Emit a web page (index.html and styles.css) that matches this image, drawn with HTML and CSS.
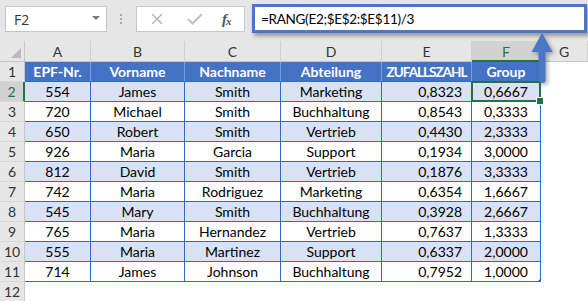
FILE: index.html
```html
<!DOCTYPE html>
<html>
<head>
<meta charset="utf-8">
<link rel="stylesheet" href="styles.css">
</head>
<body>
<div class="app">
  <div class="toolbar">
    <div class="namebox"><span>F2</span><span class="caret"></span></div>
    <div class="dots"><i></i><i></i><i></i></div>
    <div class="fxbox">
      <svg class="ico-x" width="12" height="12" viewBox="0 0 12 12"><path d="M1 1L11 11M11 1L1 11" stroke="#b3b3b3" stroke-width="1.4" fill="none"/></svg>
      <svg class="ico-check" width="16" height="12" viewBox="0 0 16 12"><path d="M1 6L5.5 10.5L15 1" stroke="#c2c2c2" stroke-width="2" fill="none"/></svg>
      <span class="fx">f<sub>x</sub></span>
    </div>
    <div class="formula">=RANG(E2;$E$2:$E$11)/3</div>
  </div>
  <div class="sheet">
    <div class="corner"><span class="tri"></span></div>
    <div class="ch">A</div><div class="ch">B</div><div class="ch">C</div><div class="ch">D</div><div class="ch">E</div><div class="ch sel">F</div><div class="ch">G</div>

    <div class="rh">1</div>
    <div class="th">EPF-Nr.</div><div class="th">Vorname</div><div class="th">Nachname</div><div class="th">Abteilung</div><div class="th tight">ZUFALLSZAHL</div><div class="th">Group</div><div class="g"></div>

    <div class="rh sel">2</div>
    <div class="td b">554</div><div class="td b">James</div><div class="td b">Smith</div><div class="td b">Marketing</div><div class="td b num">0,8323</div><div class="td b active">0,6667</div><div class="g"></div>

    <div class="rh">3</div>
    <div class="td">720</div><div class="td">Michael</div><div class="td">Smith</div><div class="td">Buchhaltung</div><div class="td num">0,8543</div><div class="td">0,3333</div><div class="g"></div>

    <div class="rh">4</div>
    <div class="td b">650</div><div class="td b">Robert</div><div class="td b">Smith</div><div class="td b">Vertrieb</div><div class="td b num">0,4430</div><div class="td b">2,3333</div><div class="g"></div>

    <div class="rh">5</div>
    <div class="td">926</div><div class="td">Maria</div><div class="td">Garcia</div><div class="td">Support</div><div class="td num">0,1934</div><div class="td">3,0000</div><div class="g"></div>

    <div class="rh">6</div>
    <div class="td b">812</div><div class="td b">David</div><div class="td b">Smith</div><div class="td b">Vertrieb</div><div class="td b num">0,1876</div><div class="td b">3,3333</div><div class="g"></div>

    <div class="rh">7</div>
    <div class="td">742</div><div class="td">Maria</div><div class="td">Rodriguez</div><div class="td">Marketing</div><div class="td num">0,6354</div><div class="td">1,6667</div><div class="g"></div>

    <div class="rh">8</div>
    <div class="td b">545</div><div class="td b">Mary</div><div class="td b">Smith</div><div class="td b">Buchhaltung</div><div class="td b num">0,3928</div><div class="td b">2,6667</div><div class="g"></div>

    <div class="rh">9</div>
    <div class="td">765</div><div class="td">Maria</div><div class="td">Hernandez</div><div class="td">Vertrieb</div><div class="td num">0,7637</div><div class="td">1,3333</div><div class="g"></div>

    <div class="rh">10</div>
    <div class="td b">555</div><div class="td b">Maria</div><div class="td b">Martinez</div><div class="td b">Support</div><div class="td b num">0,6337</div><div class="td b">2,0000</div><div class="g"></div>

    <div class="rh">11</div>
    <div class="td">714</div><div class="td">James</div><div class="td">Johnson</div><div class="td">Buchhaltung</div><div class="td num">0,7952</div><div class="td last">1,0000</div><div class="g"></div>

    <div class="rh">12</div>
    <div class="g"></div><div class="g"></div><div class="g"></div><div class="g"></div><div class="g"></div><div class="g"></div><div class="g"></div>
  </div>
  <svg class="arrow" width="30" height="56" viewBox="0 0 30 56">
    <path d="M15 1 L25.5 20 L18.5 20 L18.5 48 Q18.5 51 15 51 Q11.5 51 11.5 48 L11.5 20 L4.5 20 Z" fill="#4a78c6"/>
  </svg>
</div>
</body>
</html>
```
FILE: styles.css
```css
* { box-sizing: border-box; }
html, body { margin: 0; padding: 0; }
body { width: 588px; height: 301px; overflow: hidden; background: #fff; font-family: "Lato", "Liberation Sans", sans-serif; }
.app { position: relative; width: 588px; height: 301px; overflow: hidden; }

.toolbar { height: 41px; background: #e6e6e6; display: flex; align-items: flex-start; padding: 6px 0 0 5px; }
.namebox { width: 102px; height: 26px; background: #fff; border: 1px solid #c6c6c6; display: flex; align-items: center; justify-content: space-between; padding: 0 6px 0 8px; font-family: "Open Sans", "Noto Sans", sans-serif; font-size: 14px; color: #333; }
.caret { width: 0; height: 0; border-left: 4px solid transparent; border-right: 4px solid transparent; border-top: 4px solid #7a7a7a; margin-top: -3px; }
.dots { width: 3px; margin: 8px 0 0 13px; display: flex; flex-direction: column; gap: 2px; }
.dots i { display: block; width: 2px; height: 2px; background: #a8a8a8; }
.fxbox { width: 109px; height: 26px; margin-left: 13px; background: #fff; border: 1px solid #c6c6c6; display: flex; align-items: center; padding-left: 14px; }
.ico-x { margin-right: 24px; }
.ico-check { margin-right: 19px; }
.fx { font-family: "Liberation Serif", serif; font-style: italic; font-size: 15px; color: #555; font-weight: bold; letter-spacing: -1px; }
.fx sub { font-size: 11px; vertical-align: -1px; }
.formula { flex: 1; height: 29px; margin: -2px 1px 0 7px; background: #fff; border: 3px solid #4a78c6; box-shadow: 2px 3px 4px rgba(0,0,0,0.35); font-family: "Lato", sans-serif; font-size: 13.5px; letter-spacing: -0.3px; color: #000; padding: 4px 0 0 6px; }

.sheet { display: grid; grid-template-columns: 25px 66px 94px 96px 101px 90px 69px 1fr; grid-template-rows: 21px; grid-auto-rows: 20px; font-size: 14px; }
.corner { background: #e6e6e6; border-right: 1px solid #c6c6c6; border-bottom: 1px solid #c6c6c6; position: relative; }
.tri { position: absolute; right: 3px; bottom: 3px; width: 0; height: 0; border-left: 10px solid transparent; border-bottom: 10px solid #b8b8b8; }
.ch { background: #e6e6e6; border-right: 1px solid #d0d0d0; border-bottom: 1px solid #c6c6c6; color: #333; display: flex; align-items: center; justify-content: center; padding-top: 1px; font-size: 14px; }
.ch.sel { background: #d2d2d2; color: #217346; border-bottom: 2px solid #217346; }
.rh { background: #e6e6e6; border-right: 1px solid #c6c6c6; border-bottom: 1px solid #d6d6d6; color: #333; display: flex; align-items: center; justify-content: center; font-size: 14px; }
.rh.sel { background: #d2d2d2; color: #217346; border-right: 2px solid #217346; }

.th { background: #4472c4; color: #fff; font-weight: bold; border-right: 1px solid #7d9bd6; border-bottom: 1px solid #2f6bc0; display: flex; align-items: center; justify-content: center; }
.tight { letter-spacing: -1px; font-size: 13.5px; }
.td { background: #fff; color: #000; border-right: 1px solid #2f6bc0; border-bottom: 1px solid #2f6bc0; display: flex; align-items: center; justify-content: center; position: relative; }
.td.b { background: #d9e1f2; }
.td.num { justify-content: flex-end; padding-right: 9px; }
.g { background: #fff; }

.active::after { content: ""; position: absolute; left: -1px; top: -1px; right: -1px; bottom: -1px; border: 2px solid #217346; }
.active::before { content: ""; position: absolute; right: -4px; bottom: -4px; width: 6px; height: 6px; background: #217346; border: 1px solid #fff; z-index: 2; }
.last::after { content: ""; position: absolute; right: -1px; bottom: -1px; width: 0; height: 0; border-left: 4px solid transparent; border-bottom: 4px solid #3b63b8; }

.arrow { position: absolute; left: 527px; top: 32px; filter: drop-shadow(2px 2px 2px rgba(0,0,0,0.35)); }
```
